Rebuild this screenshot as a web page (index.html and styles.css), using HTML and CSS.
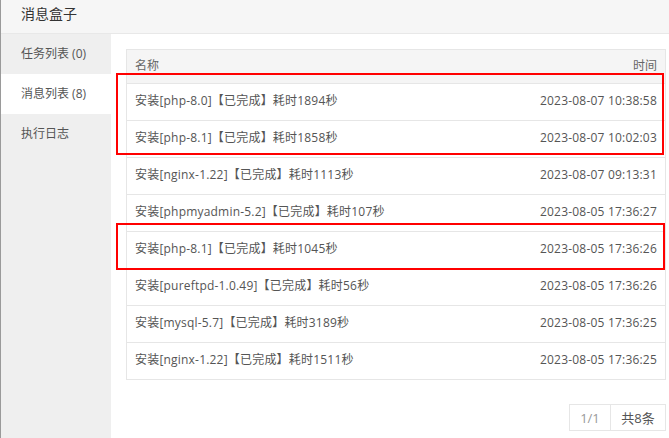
FILE: index.html
```html
<!DOCTYPE html>
<html>
<head>
<meta charset="utf-8">
<link rel="stylesheet" href="styles.css">
</head>
<body>
<div class="window">
  <div class="titlebar">消息盒子</div>
  <div class="main">
    <div class="sidebar">
      <div class="nav-item">任务列表 (0)</div>
      <div class="nav-item active">消息列表 (8)</div>
      <div class="nav-item">执行日志</div>
    </div>
    <div class="content">
      <div class="table">
        <div class="thead">
          <span>名称</span>
          <span>时间</span>
        </div>
        <div class="row"><span>安装[php-8.0]【已完成】耗时1894秒</span><span>2023-08-07 10:38:58</span></div>
        <div class="row"><span>安装[php-8.1]【已完成】耗时1858秒</span><span>2023-08-07 10:02:03</span></div>
        <div class="row"><span>安装[nginx-1.22]【已完成】耗时1113秒</span><span>2023-08-07 09:13:31</span></div>
        <div class="row"><span>安装[phpmyadmin-5.2]【已完成】耗时107秒</span><span>2023-08-05 17:36:27</span></div>
        <div class="row"><span>安装[php-8.1]【已完成】耗时1045秒</span><span>2023-08-05 17:36:26</span></div>
        <div class="row"><span>安装[pureftpd-1.0.49]【已完成】耗时56秒</span><span>2023-08-05 17:36:26</span></div>
        <div class="row"><span>安装[mysql-5.7]【已完成】耗时3189秒</span><span>2023-08-05 17:36:25</span></div>
        <div class="row"><span>安装[nginx-1.22]【已完成】耗时1511秒</span><span>2023-08-05 17:36:25</span></div>
      </div>
      <div class="pager">
        <span class="page-cur">1/1</span>
        <span class="page-total">共8条</span>
      </div>
    </div>
  </div>
  <div class="mark mark-1"></div>
  <div class="mark mark-2"></div>
</div>
</body>
</html>
```
FILE: styles.css
```css
html, body {
  margin: 0;
  padding: 0;
}
body {
  width: 669px;
  height: 438px;
  overflow: hidden;
  background: #fff;
  font-family: "Open Sans", "Noto Sans CJK SC", "Microsoft YaHei", sans-serif;
  font-size: 12px;
  color: #555;
}
.window {
  position: relative;
  display: flex;
  flex-direction: column;
  height: 438px;
  border-left: 1px solid #9a9a9a;
  box-sizing: border-box;
}
.titlebar {
  height: 33px;
  line-height: 27px;
  padding-left: 20px;
  font-size: 14px;
  color: #333;
  background: #f6f6f6;
  border-bottom: 1px solid #e8e8e8;
}
.main {
  flex: 1;
  display: flex;
}
.sidebar {
  width: 110px;
  background: #efefef;
}
.nav-item {
  height: 40px;
  line-height: 40px;
  padding-left: 20px;
  color: #555;
}
.nav-item.active {
  background: #fff;
}
.content {
  flex: 1;
  padding: 15px 3px 0 15px;
}
.table {
  border: 1px solid #e6e6e6;
}
.thead, .row {
  display: flex;
  justify-content: space-between;
  align-items: center;
  padding: 0 8px;
}
.thead span, .row span {
  line-height: 16px;
  padding-bottom: 2px;
}
.thead {
  height: 33px;
  background: #f5f5f5;
  border-bottom: 1px solid #e6e6e6;
  color: #666;
}
.row {
  height: 36px;
  border-bottom: 1px solid #e6e6e6;
  letter-spacing: 0.2px;
}
.row:last-child {
  border-bottom: none;
}
.pager {
  display: flex;
  justify-content: flex-end;
  margin-top: 24px;
}
.pager span {
  height: 27px;
  line-height: 26px;
  border: 1px solid #e6e6e6;
  box-sizing: border-box;
  text-align: center;
  font-size: 13px;
}
.page-cur {
  width: 42px;
  color: #999;
}
.page-total {
  width: 55px;
  color: #555;
  border-left: none !important;
}
.mark {
  position: absolute;
  border: 2px solid #f00;
  box-sizing: border-box;
}
.mark-1 {
  left: 115px;
  top: 73px;
  width: 548px;
  height: 82px;
}
.mark-2 {
  left: 115px;
  top: 223px;
  width: 549px;
  height: 47px;
}
```
